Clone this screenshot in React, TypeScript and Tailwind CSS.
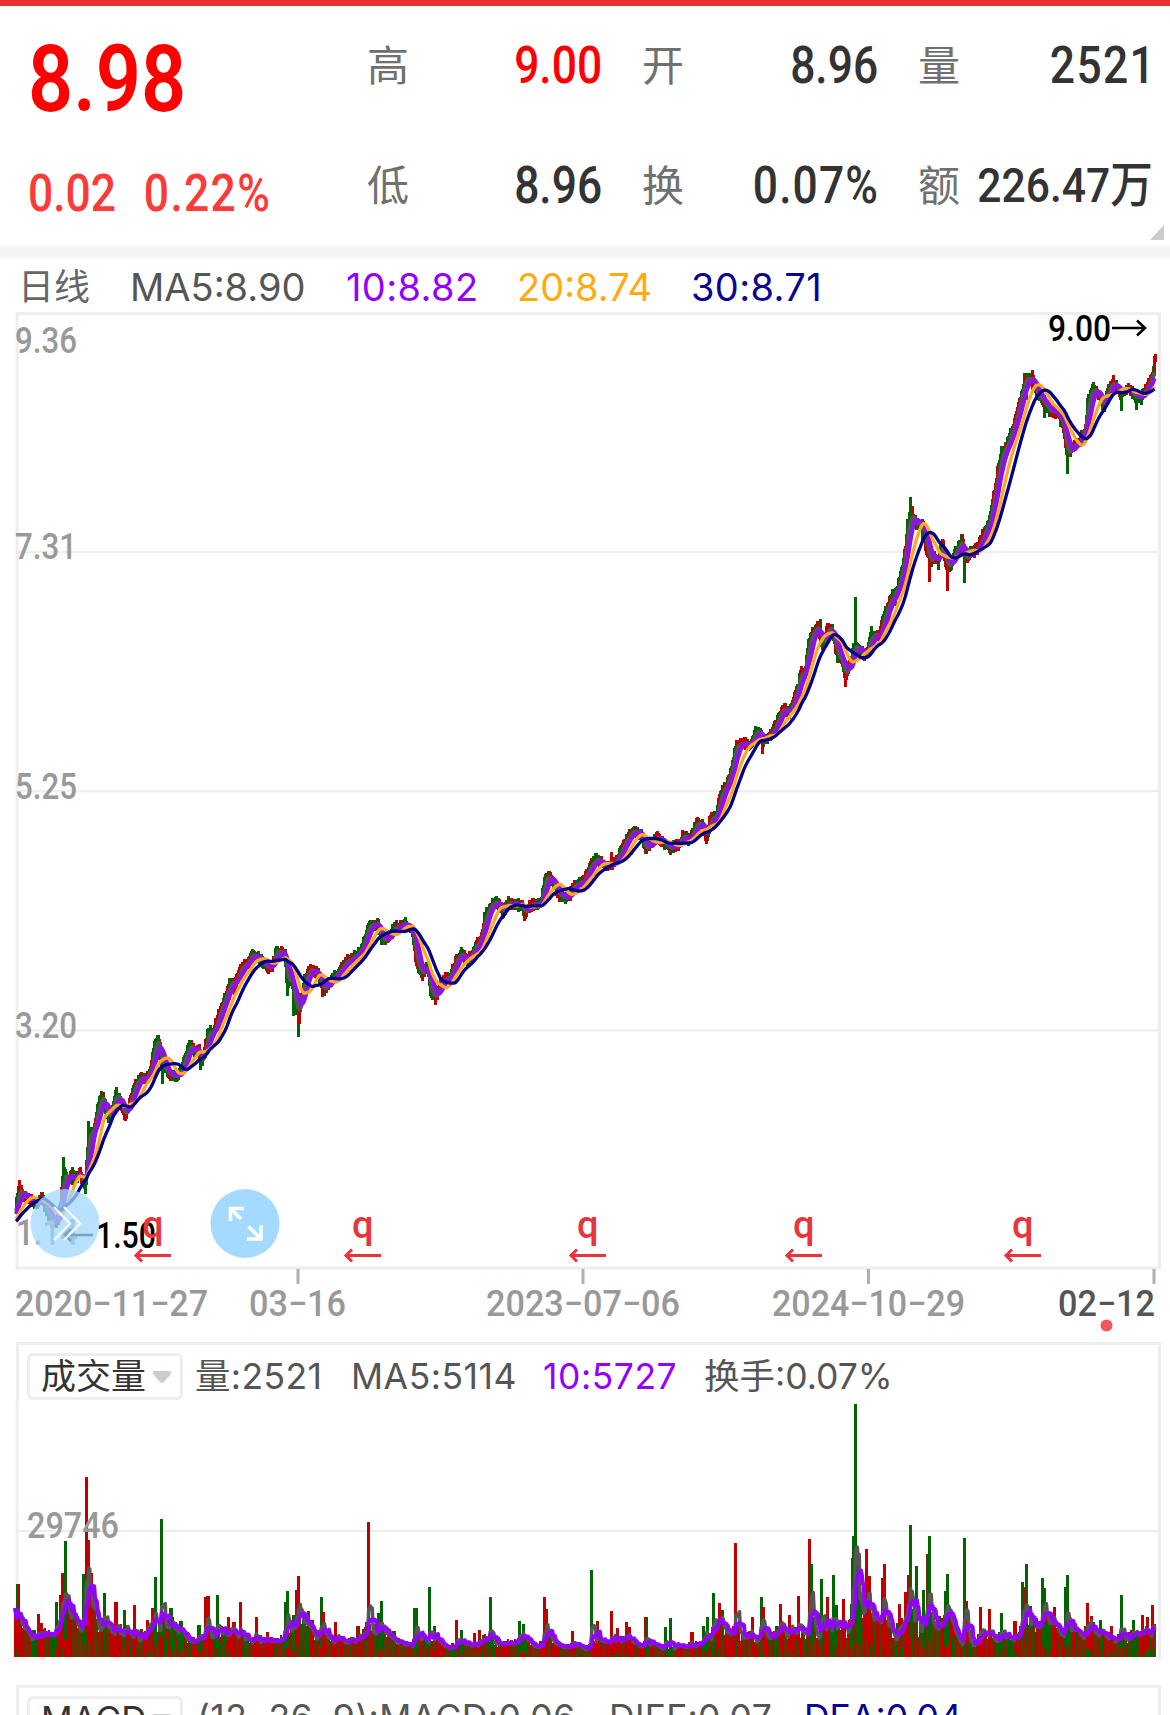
import { ReactNode } from 'react';

const STEP = 0.9;
const X0 = 16;
const COUNT = 1266;
const FONT = 'Roboto, "Noto Sans CJK SC", sans-serif';

type Point = [number, number];

// Closing price track in chart coordinates
const CLOSES: Point[] = [
    [-12, 1226], [5, 1224], [16, 1208], [19, 1186], [22, 1196], [30, 1200], [38, 1204], [41, 1196], [47, 1212],
    [52, 1223], [57, 1222], [61, 1200], [64, 1170], [67, 1180], [72, 1174], [76, 1178], [80, 1173], [85, 1186],
    [88, 1135], [93, 1132], [98, 1108], [102, 1096], [106, 1112], [110, 1118], [116, 1094], [120, 1102],
    [125, 1116], [130, 1101], [135, 1085], [140, 1078], [146, 1079], [151, 1068], [155, 1044], [158, 1040],
    [162, 1066], [166, 1070], [172, 1077], [180, 1074], [184, 1061], [190, 1044], [194, 1053], [198, 1047],
    [201, 1063], [205, 1050], [208, 1032], [213, 1033], [219, 1014], [225, 998], [230, 983], [236, 983],
    [240, 968], [246, 965], [252, 954], [260, 960], [266, 966], [271, 968], [276, 951], [284, 953], [288, 986],
    [291, 974], [294, 1000], [298, 1014], [301, 998], [304, 983], [309, 970], [318, 973], [323, 990],
    [330, 981], [337, 974], [345, 962], [355, 957], [362, 948], [368, 927], [377, 923], [382, 940], [388, 938],
    [395, 927], [405, 924], [413, 932], [416, 962], [422, 974], [427, 965], [430, 990], [435, 998], [440, 985],
    [445, 977], [450, 978], [455, 962], [461, 953], [467, 962], [475, 948], [480, 940], [485, 918], [490, 906],
    [497, 902], [503, 912], [508, 902], [515, 905], [522, 905], [524, 914], [530, 905], [541, 903],
    [545, 878], [550, 877], [555, 887], [560, 896], [568, 898], [573, 886], [583, 882], [590, 866], [597, 859],
    [603, 866], [610, 865], [617, 860], [623, 846], [632, 831], [640, 833], [645, 849], [650, 845], [657, 837],
    [663, 842], [670, 848], [678, 845], [683, 836], [690, 840], [697, 822], [703, 827], [706, 836], [711, 818],
    [716, 818], [720, 796], [726, 786], [731, 772], [736, 745], [743, 743], [750, 746], [755, 732], [760, 732],
    [763, 743], [768, 736], [773, 732], [778, 718], [783, 708], [788, 713], [793, 702], [798, 686], [800, 674],
    [805, 672], [808, 646], [812, 634], [818, 626], [822, 645], [828, 628], [832, 630], [836, 650], [842, 662],
    [845, 676], [850, 662], [855, 645], [860, 651], [866, 655], [870, 638], [875, 635], [880, 635], [885, 612],
    [892, 597], [898, 587], [903, 566], [908, 525], [911, 514], [917, 525], [922, 524], [927, 550], [930, 562],
    [934, 555], [938, 562], [942, 543], [946, 565], [950, 565], [955, 553], [962, 540], [965, 560], [970, 552],
    [976, 550], [982, 538], [990, 518], [995, 488], [1001, 456], [1007, 444], [1013, 428], [1020, 400],
    [1025, 380], [1032, 378], [1036, 392], [1043, 402], [1050, 411], [1057, 413], [1063, 424], [1067, 454],
    [1072, 447], [1080, 441], [1085, 428], [1088, 402], [1093, 388], [1099, 396], [1103, 406], [1108, 391],
    [1113, 382], [1120, 394], [1127, 388], [1135, 396], [1141, 398], [1147, 386], [1152, 376], [1156, 357],
];

// x, high, low, rising
const WICKS: [number, number, number, boolean][] = [
    [19, 1180, 1200, true], [63.5, 1157, 1190, false], [72, 1167, 1185, false], [85, 1178, 1194, false],
    [88.5, 1121, 1150, false], [102, 1092, 1105, true], [125, 1105, 1121, true], [158, 1036, 1060, false],
    [162, 1060, 1084, false], [190, 1040, 1056, false], [200, 1050, 1070, false], [208, 1028, 1050, false],
    [229, 978, 1000, false], [234, 978, 995, true], [252, 949, 965, false], [287, 965, 996, false],
    [293, 980, 1016, false], [298, 1000, 1037, false], [299, 1000, 1024, true], [322, 980, 997, true],
    [377, 918, 935, false], [422, 965, 981, true], [430, 975, 996, false], [435, 985, 1005, true],
    [461, 947, 960, false], [498, 898, 910, false], [524, 905, 921, true], [546, 873, 890, true],
    [611, 852, 865, true], [646, 840, 854, false], [670, 842, 855, false], [706, 825, 844, true],
    [762, 740, 754, true], [820, 619, 640, false], [837, 640, 663, false], [845, 660, 687, true],
    [855, 597, 655, false], [871, 626, 640, false], [885, 606, 625, false], [895, 591, 606, false],
    [910.5, 497, 540, false], [912, 506, 530, true], [922, 519, 540, false], [929, 550, 582, true],
    [938, 555, 570, false], [947, 560, 591, true], [964.5, 550, 583, false], [962, 535, 550, true],
    [1001, 446, 470, false], [1032.5, 370, 390, true], [1026, 373, 400, false], [1044, 395, 418, false],
    [1067, 440, 474, false], [1113, 375, 390, true], [1121, 390, 411, false], [1136, 390, 410, false],
    [1093, 382, 400, false], [1154, 356, 376, true], [1155.5, 354, 362, true],
];

const VOLUME_BASE: Point[] = [
    [15, 1625], [20, 1620], [25, 1626], [32, 1641], [38, 1638], [45, 1632], [55, 1640], [61, 1615], [67, 1602],
    [72, 1612], [77, 1625], [83, 1632], [90, 1602], [95, 1612], [100, 1627], [105, 1625], [115, 1633],
    [125, 1629], [133, 1639], [145, 1633], [155, 1625], [163, 1622], [168, 1624], [173, 1625], [180, 1632],
    [195, 1642], [205, 1638], [215, 1630], [225, 1632], [240, 1637], [260, 1640], [280, 1641], [286, 1634],
    [290, 1626], [294, 1629], [300, 1620], [306, 1622], [315, 1638], [323, 1632], [335, 1640], [350, 1641],
    [360, 1638], [367, 1629], [372, 1625], [378, 1630], [382, 1628], [390, 1636], [400, 1642], [410, 1645],
    [422, 1637], [428, 1643], [435, 1639], [442, 1646], [455, 1646], [462, 1641], [470, 1645], [480, 1642],
    [492, 1635], [500, 1642], [515, 1643], [525, 1640], [540, 1645], [548, 1636], [555, 1642], [565, 1645],
    [575, 1644], [585, 1648], [595, 1640], [610, 1641], [630, 1640], [640, 1645], [650, 1642], [660, 1648],
    [670, 1645], [683, 1647], [695, 1643], [705, 1640], [712, 1632], [722, 1625], [732, 1631], [740, 1631],
    [748, 1636], [757, 1640], [765, 1630], [772, 1636], [782, 1629], [790, 1633], [805, 1631], [812, 1622],
    [820, 1627], [827, 1623], [832, 1633], [840, 1626], [850, 1628], [857, 1605], [861, 1602], [866, 1621],
    [872, 1615], [880, 1626], [885, 1619], [893, 1632], [903, 1626], [912, 1616], [920, 1627], [932, 1622],
    [937, 1624], [948, 1621], [955, 1630], [960, 1642], [967, 1634], [973, 1645], [983, 1633], [995, 1636],
    [1003, 1632], [1013, 1641], [1020, 1632], [1030, 1616], [1035, 1626], [1050, 1622], [1063, 1635],
    [1070, 1626], [1080, 1637], [1090, 1627], [1100, 1632], [1115, 1640], [1130, 1636], [1145, 1633], [1156, 1631],
];

// x, top, colour key
const SPIKES: [number, number, 'r' | 'g'][] = [
    [15, 1608, 'r'], [18, 1584, 'r'], [34, 1630, 'g'], [38, 1614, 'r'], [41, 1623, 'r'], [56, 1602, 'g'],
    [61, 1595, 'r'], [62.5, 1573, 'r'], [65.5, 1541, 'g'], [83, 1574, 'g'], [86.5, 1477, 'r'], [88.5, 1540, 'r'],
    [91, 1573, 'r'], [104, 1593, 'g'], [116, 1602, 'r'], [124.5, 1610, 'g'], [134.5, 1605, 'r'], [147, 1620, 'r'],
    [153, 1608, 'r'], [155.5, 1577, 'g'], [161.5, 1519, 'g'], [171, 1608, 'g'], [181, 1621, 'g'],
    [199, 1625, 'g'], [206, 1597, 'r'], [208, 1596, 'r'], [217.5, 1595, 'g'], [228, 1617, 'r'], [234, 1622, 'r'],
    [240.5, 1602, 'r'], [256, 1617, 'r'], [267, 1632, 'r'], [285, 1602, 'g'], [287.5, 1591, 'g'], [293, 1615, 'g'],
    [296.5, 1590, 'r'], [298.5, 1576, 'r'], [308, 1611, 'g'], [312, 1620, 'r'], [321, 1597, 'g'],
    [323.5, 1612, 'r'], [335, 1622, 'r'], [358, 1626, 'r'], [368.5, 1522, 'r'], [379, 1613, 'g'],
    [381.5, 1601, 'g'], [394, 1631, 'g'], [415, 1608, 'g'], [416.5, 1608, 'g'], [429.5, 1587, 'g'], [434, 1626, 'g'],
    [456.5, 1620, 'r'], [461.5, 1630, 'g'], [474, 1633, 'r'], [479, 1630, 'r'], [490.5, 1597, 'g'],
    [519.5, 1621, 'g'], [523.5, 1624, 'g'], [544.5, 1597, 'r'], [546.5, 1609, 'r'], [572.5, 1631, 'r'],
    [591.5, 1570, 'g'], [597, 1621, 'r'], [611.5, 1611, 'r'], [617, 1628, 'r'], [626.5, 1622, 'r'],
    [629, 1627, 'r'], [646, 1617, 'g'], [665.5, 1627, 'g'], [670.5, 1618, 'g'], [692, 1632, 'r'],
    [703.5, 1626, 'g'], [707.5, 1617, 'g'], [713.5, 1593, 'g'], [719.5, 1603, 'r'], [722, 1610, 'g'],
    [735.5, 1543, 'r'], [752.5, 1617, 'r'], [761.5, 1597, 'g'], [763, 1607, 'r'], [780.5, 1604, 'r'],
    [789, 1615, 'r'], [798.5, 1596, 'r'], [809.5, 1539, 'r'], [811.5, 1564, 'g'], [821.5, 1579, 'g'],
    [827.5, 1597, 'r'], [833.5, 1575, 'g'], [836.5, 1605, 'g'], [843.5, 1599, 'r'], [851, 1604, 'g'],
    [853, 1558, 'g'], [854, 1536, 'r'], [855.5, 1404, 'g'], [857, 1555, 'g'], [859, 1567, 'g'], [866.5, 1549, 'r'],
    [869.5, 1576, 'r'], [882.5, 1578, 'r'], [884.5, 1564, 'r'], [899.5, 1604, 'r'], [905.5, 1592, 'r'],
    [909, 1575, 'r'], [910.5, 1525, 'g'], [916.5, 1566, 'g'], [923.5, 1590, 'g'], [928, 1554, 'g'],
    [929.5, 1536, 'g'], [945.5, 1591, 'g'], [947.5, 1574, 'g'], [964.5, 1538, 'g'], [966.5, 1601, 'r'],
    [980.5, 1607, 'r'], [989.5, 1609, 'r'], [1001.5, 1613, 'g'], [1015, 1621, 'r'], [1022.5, 1582, 'g'],
    [1024, 1587, 'r'], [1026.5, 1564, 'g'], [1042.5, 1578, 'g'], [1044.5, 1588, 'g'], [1050.5, 1612, 'g'],
    [1054.5, 1607, 'r'], [1065.5, 1587, 'g'], [1067.5, 1575, 'g'], [1087.5, 1603, 'r'], [1091, 1616, 'r'],
    [1100, 1620, 'g'], [1111, 1626, 'r'], [1121.5, 1595, 'g'], [1133.5, 1620, 'g'], [1142.5, 1615, 'r'],
    [1147.5, 1617, 'r'], [1152.5, 1605, 'r'],
];

function noise(i: number) {
    const n = Math.sin(i * 127.1 + 11.7) * 43758.5453;
    return n - Math.floor(n);
}

function sample(points: Point[], x: number) {
    const next = points.findIndex((p) => p[0] >= x);
    if (next === -1) return points[points.length - 1][1];
    if (next === 0) return points[0][1];
    const [xa, ya] = points[next - 1];
    const [xb, yb] = points[next];
    return ya + ((yb - ya) * (x - xa)) / (xb - xa);
}

const LEAD = 30;
const closes = Array.from({ length: COUNT + LEAD }, (_, i) => {
    return sample(CLOSES, X0 + (i - LEAD) * STEP) + (noise(i) - 0.5) * 3;
});

function average(values: number[], end: number, span: number) {
    let total = 0;
    let used = 0;
    for (let i = Math.max(0, end - span + 1); i <= end; i++) {
        total += values[i];
        used++;
    }
    return total / used;
}

function priceLine(span: number) {
    return Array.from({ length: COUNT }, (_, i) => {
        return `${(X0 + i * STEP).toFixed(1)},${average(closes, i + LEAD, span).toFixed(1)}`;
    }).join(' ');
}

const BASELINE = 1657;
const volumes = Array.from({ length: COUNT + 2 }, (_, i) => {
    const x = 15 + i * STEP;
    const height = BASELINE - sample(VOLUME_BASE, x);
    return height * (0.55 + noise(i + 900) * 0.75);
});
SPIKES.forEach(([x, top]) => {
    volumes[Math.round((x - 15) / STEP)] = BASELINE - top;
});

function volumeLine(span: number) {
    return volumes
        .map((_, i) => `${(15 + i * STEP).toFixed(1)},${(BASELINE - average(volumes, i, span)).toFixed(1)}`)
        .join(' ');
}

const RED = '#c00000';
const GREEN = '#006400';
const BROWN = '#663300';

function volumeColor(i: number) {
    const patch = noise(Math.floor(i / 8) + 40) * 0.6 + noise(i + 77) * 0.4;
    if (patch > 0.58) return BROWN;
    return patch > 0.4 ? RED : patch > 0.27 ? GREEN : RED;
}

function Candles() {
    return (
        <g shapeRendering="crispEdges">
            {closes.slice(LEAD).map((close, i) => {
                const x = X0 + i * STEP;
                const up = noise(i + 300) * 4 + 2;
                const down = noise(i + 600) * 4 + 2;
                const previous = closes[i + LEAD - 1];
                const color = noise(Math.floor(i / 3) + 9) > 0.5 ? RED : GREEN;
                const top = Math.min(close, previous) - up;
                const bottom = Math.max(close, previous) + down;
                return <rect key={i} x={x - 1.5} y={top} width="3" height={bottom - top} fill={color} />;
            })}
            {WICKS.map(([x, high, low, rising]) => (
                <rect key={x} x={x - 1.5} y={high} width="3" height={low - high} fill={rising ? RED : GREEN} />
            ))}
        </g>
    );
}

function ChartText({
    x,
    y,
    width,
    fill = '#999',
    size = 36,
    weight = 500,
    children,
}: {
    x: number;
    y: number;
    width: number;
    fill?: string;
    size?: number;
    weight?: number;
    children: string;
}) {
    return (
        <text
            x={x}
            y={y}
            fill={fill}
            fontSize={size}
            fontWeight={weight}
            fontFamily={FONT}
            textLength={width}
            lengthAdjust="spacingAndGlyphs"
        >
            {children}
        </text>
    );
}

function Dividend({ x }: { x: number }) {
    return (
        <g>
            <text x={x + 7} y={1238} fontSize="38" fill="#e8343a" fontFamily={FONT} fontWeight="500">
                q
            </text>
            <path d={`M${x + 36} 1255.5H${x + 1}M${x + 7} 1249.5l-6 6 6 6`} stroke="#e8343a" strokeWidth="3" fill="none" />
        </g>
    );
}

function PriceChart() {
    return (
        <svg className="block" width="1170" height="1030" viewBox="0 312 1170 1030">
            <rect x="17" y="313.5" width="1142.5" height="954.5" fill="none" stroke="#eee" strokeWidth="3" />
            <path d="M17 552H1160M17 791H1160M17 1030.5H1160" stroke="#efefef" strokeWidth="2.5" />
            <Candles />
            <g fill="none" strokeWidth="3.3" strokeLinejoin="round">
                <polyline points={priceLine(5)} stroke="#555" strokeWidth="4" />
                <polyline points={priceLine(10)} stroke="#9010e8" strokeWidth="4.5" />
                <polyline points={priceLine(20)} stroke="#ffa920" />
                <polyline points={priceLine(30)} stroke="#00008b" />
            </g>
            <ChartText x={15} y={353} width={62}>9.36</ChartText>
            <ChartText x={15} y={559} width={62}>7.31</ChartText>
            <ChartText x={15} y={799} width={62}>5.25</ChartText>
            <ChartText x={15} y={1038} width={62}>3.20</ChartText>
            <ChartText x={16} y={1245} width={62}>1.14</ChartText>
            <path d="M93 1235H66M71 1229l-6 6 6 6" stroke="#000" strokeWidth="2.5" fill="none" />
            <ChartText x={96} y={1248} width={60} fill="#000">1.50</ChartText>
            <ChartText x={1048} y={341} width={63} fill="#000">9.00</ChartText>
            <path d="M1112 328H1145M1137 320.5l8 7.5-8 7.5" stroke="#000" strokeWidth="2.5" fill="none" />
            {[135, 345, 570, 786, 1005].map((x) => (
                <Dividend key={x} x={x} />
            ))}
            <path d="M298 1269V1284M583 1269V1284M868.5 1269V1284M1154 1269V1284" stroke="#b0b0b0" strokeWidth="3" />
            <ChartText x={15} y={1316} width={193}>2020−11−27</ChartText>
            <ChartText x={249} y={1316} width={97}>03−16</ChartText>
            <ChartText x={486} y={1316} width={194}>2023−07−06</ChartText>
            <ChartText x={772} y={1316} width={193}>2024−10−29</ChartText>
            <ChartText x={1058} y={1316} width={97} fill="#555">02−12</ChartText>
            <circle cx="1106.5" cy="1325.5" r="6" fill="#f2555d" />
            <circle cx="65" cy="1223.5" r="34.5" fill="#a0d8ff" fillOpacity="0.75" />
            <path d="M54 1207l16 16.5-16 16.5M64 1207l16 16.5-16 16.5" stroke="#fff" strokeOpacity="0.85" strokeWidth="2.5" fill="none" />
            <circle cx="245" cy="1223.5" r="34.5" fill="#a4daff" />
            <path
                d="M230.5 1221V1208.5H244M231 1209l10 10M248.5 1226.5l12 12M247 1239H261V1225.5"
                stroke="#fff"
                strokeWidth="3.5"
                fill="none"
            />
        </svg>
    );
}

function VolumeChart() {
    return (
        <svg className="block" width="1170" height="283" viewBox="0 1402 1170 283">
            <path d="M17 1402V1660M1159.5 1402V1660" stroke="#eee" strokeWidth="3" />
            <path d="M17 1531H1160" stroke="#ececec" strokeWidth="2" />
            <g shapeRendering="crispEdges">
                {volumes.map((v, i) => (
                    <rect key={i} x={13.5 + i * STEP} y={BASELINE - v} width={i % 3 ? 2 : 3} height={v} fill={volumeColor(i)} />
                ))}
                {SPIKES.map(([x, top, kind]) => (
                    <rect key={x} x={x - 1.5} y={top} width="3" height={(BASELINE - top) * 0.85} fill={kind === 'r' ? RED : GREEN} />
                ))}
            </g>
            <g fill="none" strokeWidth="3.5" strokeLinejoin="round">
                <polyline points={volumeLine(5)} stroke="#555" />
                <polyline points={volumeLine(10)} stroke="#9400ff" strokeWidth="4" />
            </g>
            <ChartText x={27} y={1538} width={92}>29746</ChartText>
        </svg>
    );
}

function Stat({
    label,
    value,
    className = 'text-[51px] text-[#333]',
}: {
    label: string;
    value: string;
    className?: string;
}) {
    return (
        <div className="flex h-[120px] items-center">
            <span className="w-[42px] shrink-0 pt-[2px] text-[42px] leading-none text-[#707070]">{label}</span>
            <div className="flex w-0 grow justify-end pb-[2px]">
                <span className={`origin-right scale-x-[0.87] leading-none font-medium whitespace-nowrap ${className}`}>
                    {value}
                </span>
            </div>
        </div>
    );
}

function Picker({ children }: { children: ReactNode }) {
    return (
        <div className="ml-[28px] flex h-[47px] w-[156px] shrink-0 items-center rounded-md border-3 border-[#eee] pl-[11px] text-[35px] leading-none whitespace-nowrap text-[#333]">
            {children}
            <svg className="ml-[6px] shrink-0" width="20" height="12" viewBox="0 0 20 12">
                <path d="M2 0h16q2 1 1 3l-7 8q-2 1-4 0L1 3Q0 1 2 0Z" fill="#ccc" />
            </svg>
        </div>
    );
}

export default function App() {
    return (
        <div className="h-[1715px] w-[1170px] overflow-hidden bg-white font-[Roboto,'Noto_Sans_CJK_SC',sans-serif]">
            <div className="h-[6px] bg-[#e93030]" />
            <header className="relative flex h-[240px]">
                <div className="w-[367px] pl-[28px] whitespace-nowrap">
                    <div className="mt-[28px] h-[92px] origin-left scale-x-[0.86] text-[92px] leading-[92px] font-semibold text-[#f00]">
                        8.98
                    </div>
                    <div className="mt-[43px] flex h-[50px] origin-left scale-x-[0.87] gap-[32px] text-[51px] leading-[50px] font-medium text-[#fb3a3a]">
                        <span>0.02</span>
                        <span className="tracking-[0.03em]">0.22%</span>
                    </div>
                </div>
                <div className="grid grid-cols-[235px_236px_235px] content-start gap-x-[40px]">
                    <Stat label="高" value="9.00" className="text-[51px] text-[#f00]" />
                    <Stat label="开" value="8.96" />
                    <Stat label="量" value="2521" className="-mr-[3px] text-[51px] tracking-[0.03em] text-[#333]" />
                    <Stat label="低" value="8.96" />
                    <Stat label="换" value="0.07%" className="-mr-[1px] text-[51px] tracking-[0.025em] text-[#333]" />
                    <Stat label="额" value="226.47万" className="text-[49px] text-[#333]" />
                </div>
                <svg className="absolute right-[6px] bottom-[6px]" width="14" height="15" viewBox="0 0 14 15">
                    <path d="M14 0V15H0Z" fill="#ccc" />
                </svg>
            </header>
            <div className="h-[12px] bg-[#f4f4f4]" />

            <div className="grid h-[54px] grid-cols-[112px_216px_171px_174px_auto] items-center pt-[4px] pl-[18px] font-[Inter,'Noto_Sans_CJK_SC',sans-serif] text-[38px] leading-none whitespace-nowrap text-[#555]">
                <span className="text-[36px] text-[#666]">日线</span>
                <span>MA5:8.90</span>
                <span className="tracking-[0.01em] text-[#9400ff]">10:8.82</span>
                <span className="text-[#ffab10]">20:8.74</span>
                <span className="tracking-[0.01em] text-[#0a0590]">30:8.71</span>
            </div>
            <PriceChart />

            <section>
                <div className="mr-[9px] ml-[15.5px] h-[3px] bg-[#eee]" />
                <div className="mr-[9px] ml-[15.5px] flex h-[57px] items-center border-x-3 border-[#eee] pt-[6px] font-[Inter,'Noto_Sans_CJK_SC',sans-serif] text-[35.5px] leading-none whitespace-nowrap text-[#555]">
                    <div className="-ml-[19.5px]">
                        <Picker>成交量</Picker>
                    </div>
                    <span className="ml-[12px] w-[156px] tracking-[0.01em]">量:2521</span>
                    <span className="w-[192px] tracking-[0.015em]">MA5:5114</span>
                    <span className="w-[161px] tracking-[0.015em] text-[#9400ff]">10:5727</span>
                    <span>换手:0.07%</span>
                </div>
                <VolumeChart />
            </section>

            <section className="mr-[9px] ml-[15.5px] flex h-[100px] border-3 border-[#eee] pt-[8px] font-[Inter,'Noto_Sans_CJK_SC',sans-serif] text-[35.5px] leading-[43px] whitespace-nowrap text-[#555]">
                <div className="-ml-[19.5px]">
                    <Picker>MACD</Picker>
                </div>
                <span className="ml-[14px] w-[412px] tracking-[0.012em]">(12, 26, 9):MACD:0.06</span>
                <span className="w-[195px] tracking-[0.01em]">DIFF:0.07</span>
                <span className="text-[#0a0590]">DEA:0.04</span>
            </section>
        </div>
    );
}
